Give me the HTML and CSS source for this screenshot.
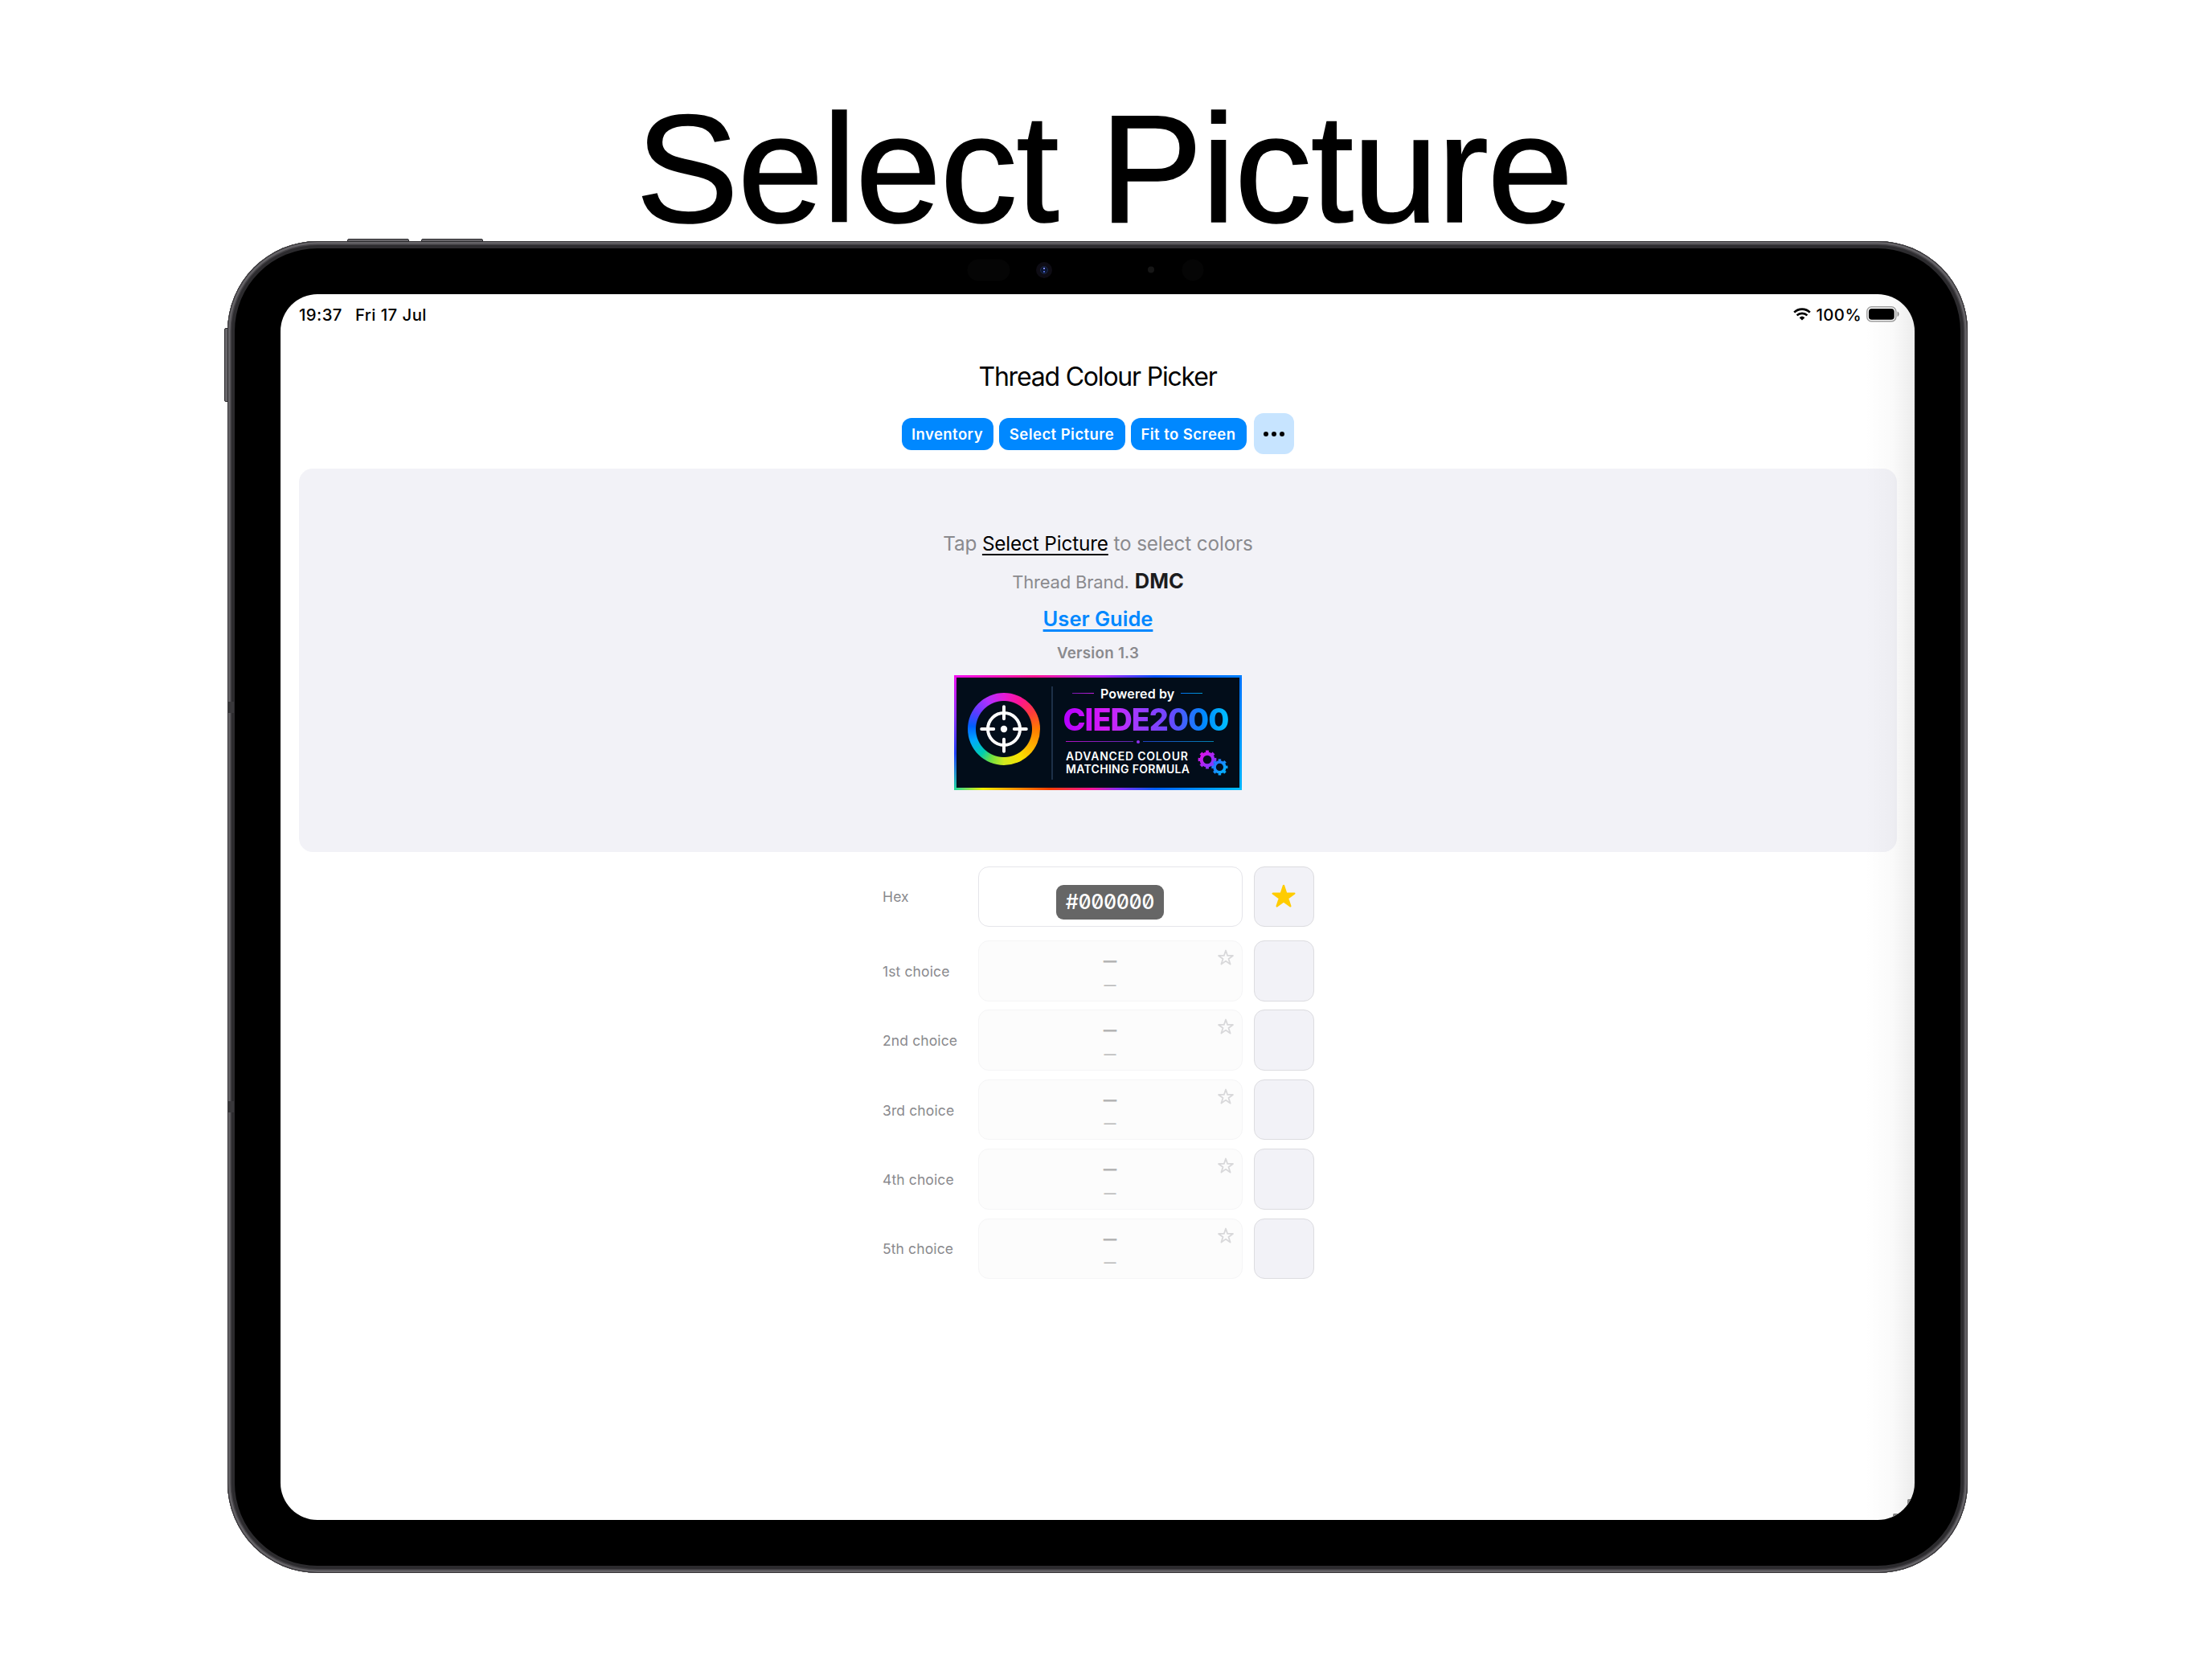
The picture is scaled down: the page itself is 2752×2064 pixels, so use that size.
FILE: index.html
```
<!DOCTYPE html>
<html lang="en">

<head>
    <meta charset="UTF-8">
    <meta name="viewport" content="width=device-width, initial-scale=1.0">
    <title>Thread Colour Picker</title>
    <link rel="stylesheet" href="styles.css">
</head>

<body>
    <h1 class="headline">Select Picture</h1>

    <div class="device">
        <span class="side-button volume-up"></span>
        <span class="side-button volume-down"></span>
        <span class="side-button power"></span>

        <svg class="sensors" width="300" height="30" viewBox="0 0 300 30">
            <rect x="3.5" y="1.5" width="53" height="27" rx="13.5" fill="#050505" />
            <circle cx="99" cy="15" r="10" fill="#0e0c14" />
            <circle cx="99" cy="15" r="4.5" fill="#0a1430" stroke="#1d2947" />
            <rect x="98" y="12" width="2" height="2" fill="#7f86e8" />
            <rect x="98" y="16" width="2" height="2" fill="#4a62c8" />
            <circle cx="232" cy="14.5" r="4" fill="#161616" />
            <circle cx="284" cy="15" r="13.5" fill="#050505" />
        </svg>

        <div class="screen">
            <div class="status-bar">
                <span class="time">19:37</span>
                <span class="date">Fri 17 Jul</span>
                <svg class="wifi" width="22" height="16" viewBox="0 0 22 16">
                    <path d="M1.2 5.6a14 14 0 0 1 19.6 0M4.6 9.4a9.2 9.2 0 0 1 12.8 0" fill="none" stroke="#000" stroke-width="2.7" />
                    <path d="M11 15.6L7.6 12.2a5 5 0 0 1 6.8 0z" />
                </svg>
                <span class="percent">100%</span>
                <svg class="battery" width="42" height="20" viewBox="0 0 42 20">
                    <rect x="0.8" y="0.8" width="36" height="18" rx="5.6" fill="none" stroke="#a0a0a0" stroke-width="1.5" />
                    <rect x="2.9" y="2.9" width="31.8" height="13.8" rx="3.8" />
                    <path d="M38.6 6.6c2.6 1 2.6 5.4 0 6.4z" fill="#8c8c8c" />
                </svg>
            </div>

            <h2 class="app-title">Thread Colour Picker</h2>

            <div class="toolbar">
                <button class="btn inventory">Inventory</button>
                <button class="btn select">Select Picture</button>
                <button class="btn fit">Fit to Screen</button>
                <button class="more">
                    <svg width="28" height="8" viewBox="0 0 28 8">
                        <circle cx="4" cy="4" r="3" />
                        <circle cx="14" cy="4" r="3" />
                        <circle cx="24" cy="4" r="3" />
                    </svg>
                </button>
            </div>

            <div class="canvas">
                <p class="hint">Tap <u>Select Picture</u> to select colors</p>
                <p class="brand"><small>Thread Brand.</small> <b>DMC</b></p>
                <a class="guide">User Guide</a>
                <p class="version">Version 1.3</p>

                <div class="badge">
                    <div class="ring">
                        <svg width="60" height="60" viewBox="0 0 60 60" fill="none" stroke="#fff" stroke-linecap="round">
                            <circle cx="30" cy="30" r="20" stroke-width="4" />
                            <path d="M30 2.2v15M30 42.8v15M2.2 30h15M42.8 30h15" stroke-width="4" />
                            <circle cx="30" cy="30" r="4.2" fill="#fff" stroke="none" />
                        </svg>
                    </div>
                    <div class="badge-divider"></div>
                    <div class="badge-text">
                        <div class="powered"><i></i><span>Powered by</span><i></i></div>
                        <div class="ciede"><span>CIEDE2000</span></div>
                        <div class="rule"><i></i><b></b><i></i></div>
                        <div class="formula">
                            <div>
                                <div class="advanced">ADVANCED COLOUR</div>
                                <div class="matching">MATCHING FORMULA</div>
                            </div>
                            <svg width="38" height="32" viewBox="0 0 38 32" fill="none">
                                <defs>
                                    <linearGradient id="gearA" x1="0" y1="0" x2="1" y2="1">
                                        <stop offset="0" stop-color="#e010e8" />
                                        <stop offset="1" stop-color="#7a3cff" />
                                    </linearGradient>
                                    <linearGradient id="gearB" x1="0" y1="0" x2="1" y2="1">
                                        <stop offset="0" stop-color="#2a6cff" />
                                        <stop offset="1" stop-color="#00b4ff" />
                                    </linearGradient>
                                </defs>
                                <circle cx="12" cy="12" r="7.4" stroke="url(#gearA)" stroke-width="4.2" />
                                <circle cx="12" cy="12" r="10" stroke="url(#gearA)" stroke-width="2.8" pathLength="16" stroke-dasharray="1 1" stroke-dashoffset="0.5" />
                                <circle cx="27.4" cy="21.4" r="6.4" stroke="url(#gearB)" stroke-width="3.6" />
                                <circle cx="27.4" cy="21.4" r="8.8" stroke="url(#gearB)" stroke-width="2.6" pathLength="16" stroke-dasharray="1 1" stroke-dashoffset="0.5" />
                            </svg>
                        </div>
                    </div>
                </div>
            </div>

            <div class="results">
                <div class="row hex">
                    <label>Hex</label>
                    <div class="field"><span class="pill">#000000</span></div>
                    <div class="swatch">
                        <svg width="32" height="32" viewBox="0 0 32 32">
                            <path d="M16 3l3.2 9.6h10.1l-8.2 6 3.2 9.8L16 22.4l-8.300 6 3.200-9.800-8.200-6h10.100z" fill="#ffcc00" stroke="#ffcc00" stroke-width="2.4" stroke-linejoin="round" />
                        </svg>
                    </div>
                </div>
            </div>

            <div class="shade"></div>
            <svg class="corner" width="26" height="26" viewBox="0 0 26 26" fill="#858585">
                <rect x="18" y="0" width="6" height="10" rx="1.5" />
                <rect x="0" y="18" width="10" height="6" rx="1.5" />
            </svg>
        </div>
    </div>

    <script>
        const results = document.querySelector('.results');
        ['1st', '2nd', '3rd', '4th', '5th'].forEach(n => {
            const row = document.createElement('div');
            row.className = 'row choice';
            row.innerHTML = `
                <label>${n} choice</label>
                <div class="field">
                    <b>—</b>
                    <small>—</small>
                    <svg class="star" width="22" height="22" viewBox="0 0 32 32">
                        <path d="M16 3.6l3.2 9.4h9.800l-7.900 5.900 3 9.600L16 22.700l-8.100 5.800 3-9.600L3 13h9.800z" />
                    </svg>
                </div>
                <div class="swatch"></div>`;
            results.appendChild(row);
        });
    </script>
</body>

</html>
```
FILE: styles.css
```
* {
    box-sizing: border-box;
}

body {
    margin: 0;
    width: 2752px;
    height: 2064px;
    overflow: hidden;
    background-color: #fff;
    font-family: Inter, sans-serif;
    color: #000;
}

h1, h2, p {
    margin: 0;
    font-weight: 400;
}

.headline {
    padding: 110px 5px 0 0;
    height: 300px;
    text-align: center;
    font-family: "Liberation Sans", Arial, sans-serif;
    font-size: 192px;
    line-height: 200px;
    letter-spacing: -1.400px;
    -webkit-text-stroke: 1.600px #000;
}

/* tablet frame */
.device {
    position: relative;
    width: 2165px;
    height: 1657px;
    margin-left: 283px;
    padding: 66px;
    border-radius: 112px;
    background-color: #000;
    box-shadow: inset 0 0 0 1px #363437, inset 0 0 0 3.5px #656367, inset 0 0 0 5px #434145, inset 0 0 0 9px #2c2b2e;
}

/* antenna bands */
.device::before,
.device::after {
    content: "";
    position: absolute;
    left: 1px;
    width: 7px;
    height: 14px;
    background-color: #39383b;
}

.device::before {
    top: 573px;
}

.device::after {
    top: 1070px;
}

.side-button {
    position: absolute;
    background-color: #68666a;
    border: 1px solid #2c2b2e;
}

.volume-up,
.volume-down {
    top: -3px;
    width: 77px;
    height: 4px;
    border-radius: 2px 2px 0 0;
}

.volume-up {
    left: 149px;
}

.volume-down {
    left: 241px;
}

.power {
    left: -4px;
    top: 108px;
    width: 5px;
    height: 92px;
    border-radius: 2px 0 0 2px;
}

.sensors {
    position: absolute;
    left: 917px;
    top: 21px;
}

.screen {
    position: relative;
    width: 2033px;
    height: 1525px;
    border-radius: 46px;
    background-color: #fff;
    overflow: hidden;
}

.shade {
    position: absolute;
    right: 0;
    top: 0;
    width: 62px;
    height: 100%;
    background: linear-gradient(to right, rgba(0, 0, 0, 0), rgba(0, 0, 0, 0.018) 55%, rgba(0, 0, 0, 0.075));
}

.corner {
    position: absolute;
    right: 1px;
    bottom: 0;
}

.status-bar {
    display: flex;
    align-items: center;
    height: 30px;
    margin-top: 10px;
    padding: 0 18px 0 23px;
    font-size: 20.3px;
    font-weight: 500;
    letter-spacing: 0.45px;
}

.date {
    margin-left: 16px;
}

.wifi {
    margin-left: auto;
}

.percent {
    margin: 0 6px 0 6px;
}

.app-title {
    margin-top: 43px;
    text-align: center;
    font-size: 32px;
    line-height: 40px;
    letter-spacing: -1.2px;
}

.toolbar {
    display: flex;
    justify-content: center;
    align-items: center;
    gap: 7px;
    height: 51px;
    margin-top: 25px;
}

.btn,
.more {
    padding: 0;
    border: none;
    font-family: inherit;
}

.btn {
    height: 40px;
    border-radius: 12px;
    background-color: #0088ff;
    color: #fff;
    font-size: 18.5px;
    font-weight: 600;
    letter-spacing: 0.45px;
}

.inventory {
    width: 114px;
}

.select {
    width: 157px;
}

.fit {
    width: 144px;
}

.more {
    display: flex;
    align-items: center;
    justify-content: center;
    width: 50px;
    height: 51px;
    margin-left: 2px;
    border-radius: 12px;
    background-color: #c7e4ff;
}

.canvas {
    display: flex;
    flex-direction: column;
    align-items: center;
    height: 477px;
    margin: 18px 22px 0 23px;
    padding-top: 78px;
    border-radius: 17px;
    background-color: #f2f2f7;
    color: #8a8a8e;
    white-space: nowrap;
}

.hint {
    font-size: 24.3px;
    line-height: 30px;
    letter-spacing: -0.15px;
}

.hint u {
    color: #000;
    text-decoration-thickness: 2px;
    text-underline-offset: 4px;
}

.brand {
    margin-top: 17px;
    font-size: 25.5px;
    line-height: 30px;
}

.brand small {
    font-size: 22px;
    letter-spacing: -0.2px;
}

.brand b {
    color: #1c1c1e;
}

.guide {
    margin-top: 16px;
    color: #0088ff;
    font-size: 25.5px;
    font-weight: 600;
    line-height: 30px;
    text-decoration: underline;
    text-decoration-thickness: 2.5px;
    text-underline-offset: 4px;
}

.version {
    margin-top: 16px;
    font-size: 18.8px;
    font-weight: 600;
    line-height: 24px;
    letter-spacing: 0.25px;
}

/* CIEDE2000 badge */
.badge {
    display: flex;
    width: 358px;
    height: 143px;
    margin-top: 14.5px;
    background:
        linear-gradient(to right, #f010f0, #ff1493 28%, #b020ff 52%, #0050ff 70%, #0080ff) top / 100% 3px no-repeat,
        linear-gradient(to right, #20d8a0, #f0f000 10%, #ff9000 22%, #ff4000 33%, #ff1493 47%, #8030ff 58%, #0060ff 70%, #00c0ff) bottom / 100% 3px no-repeat,
        linear-gradient(#f010f0, #9030ff 35%, #2040ff 68%, #20d8a0) left / 3px 100% no-repeat,
        linear-gradient(#0070ff, #00b4ff) right / 3px 100% no-repeat,
        #020d1a;
}

.ring {
    display: flex;
    align-items: center;
    justify-content: center;
    width: 90px;
    height: 90px;
    margin: 22.5px 0 0 17px;
    border-radius: 50%;
    background:
        radial-gradient(circle, #020d1a 34.5px, transparent 35.5px),
        conic-gradient(#e21bd8, #ff1493 30deg, #ff3b3b 60deg, #ff7a00 90deg, #ffae00 120deg, #f8e000 150deg, #d0e820 180deg, #70e040 203deg, #00ccb0 222deg, #00a8ff 250deg, #0060ff 275deg, #5a3cff 300deg, #b030ff 330deg, #e21bd8);
}

.badge-divider {
    width: 2px;
    height: 116px;
    margin: 14px 0 0 13.5px;
    background-color: #1d3048;
}

.badge-text {
    width: 222px;
    padding-left: 13px;
    color: #fff;
    font-weight: 600;
}

.powered {
    display: flex;
    align-items: center;
    gap: 8px;
    height: 20px;
    margin: 13px 0 0 11.5px;
    font-size: 16px;
    letter-spacing: 0.15px;
}

.powered i {
    width: 27px;
    height: 1px;
    background: linear-gradient(to right, #7a18b0, #c020e0);
}

.powered i:last-child {
    background: linear-gradient(to right, #0070f0, #0098d0);
}

.ciede {
    height: 40px;
    margin-top: 2px;
    font-size: 37.8px;
    font-weight: 800;
    line-height: 40px;
    letter-spacing: -1px;
}

.ciede span {
    background: linear-gradient(to right, #b400ff, #d61cf8 25%, #a838ff 42%, #6a48ff 65%, #0088ff 85%, #00c0ff);
    -webkit-background-clip: text;
    background-clip: text;
    color: transparent;
}

.rule {
    display: flex;
    align-items: center;
    gap: 4px;
    height: 4px;
    margin: 6px 0 0 3px;
}

.rule i {
    width: 84px;
    height: 1px;
    background: linear-gradient(to right, #b010c0, #5a28b0);
}

.rule i:last-child {
    width: 88px;
    background: linear-gradient(to right, #2040c0, #0080b0);
}

.rule b {
    width: 4px;
    height: 4px;
    border-radius: 50%;
    background-color: #9030f0;
}

.formula {
    display: flex;
    margin: 8px 0 0 3.5px;
    font-size: 14px;
    line-height: 16.3px;
}

.formula svg {
    margin-left: 10px;
}

.advanced {
    letter-spacing: 0.78px;
}

.matching {
    letter-spacing: 0.3px;
}

/* colour results */
.results {
    margin: 17.500px 0 0 749px;
}

.row {
    display: flex;
    align-items: center;
    height: 75.5px;
    margin-bottom: 10.9px;
}

.row.hex {
    margin-bottom: 17px;
}

.row label {
    width: 118.5px;
    padding-top: 1px;
    color: #8a8a8e;
    font-size: 17.5px;
    letter-spacing: 0.12px;
}

.field {
    position: relative;
    display: flex;
    flex-direction: column;
    align-items: center;
    width: 329px;
    height: 75.5px;
    border: 1.5px solid #e5e5ea;
    border-radius: 13px;
}

.choice .field {
    border-color: #f5f5f6;
    background-color: #fcfcfc;
}

.field b {
    margin-top: 13px;
    color: #b4b4b4;
    font-size: 16.5px;
    font-weight: 900;
    line-height: 22px;
}

.field small {
    margin-top: 8.5px;
    color: #b8b8b8;
    font-size: 15px;
    font-weight: 500;
    line-height: 22px;
}

.star {
    position: absolute;
    top: 9px;
    right: 9px;
    fill: none;
    stroke: #d8d8da;
    stroke-width: 2.6;
    stroke-linejoin: round;
}

.pill {
    width: 134px;
    height: 43px;
    margin-top: 22.5px;
    border-radius: 9px;
    background-color: #666;
    color: #fff;
    font-size: 25px;
    font-weight: 500;
    font-feature-settings: "zero", "tnum";
    line-height: 43px;
    letter-spacing: -0.4px;
    text-align: center;
}

.swatch {
    display: flex;
    align-items: center;
    justify-content: center;
    width: 75px;
    height: 75.5px;
    margin-left: 14px;
    border: 1.5px solid #dcdce0;
    border-radius: 13px;
    background-color: #f2f2f7;
}
```
